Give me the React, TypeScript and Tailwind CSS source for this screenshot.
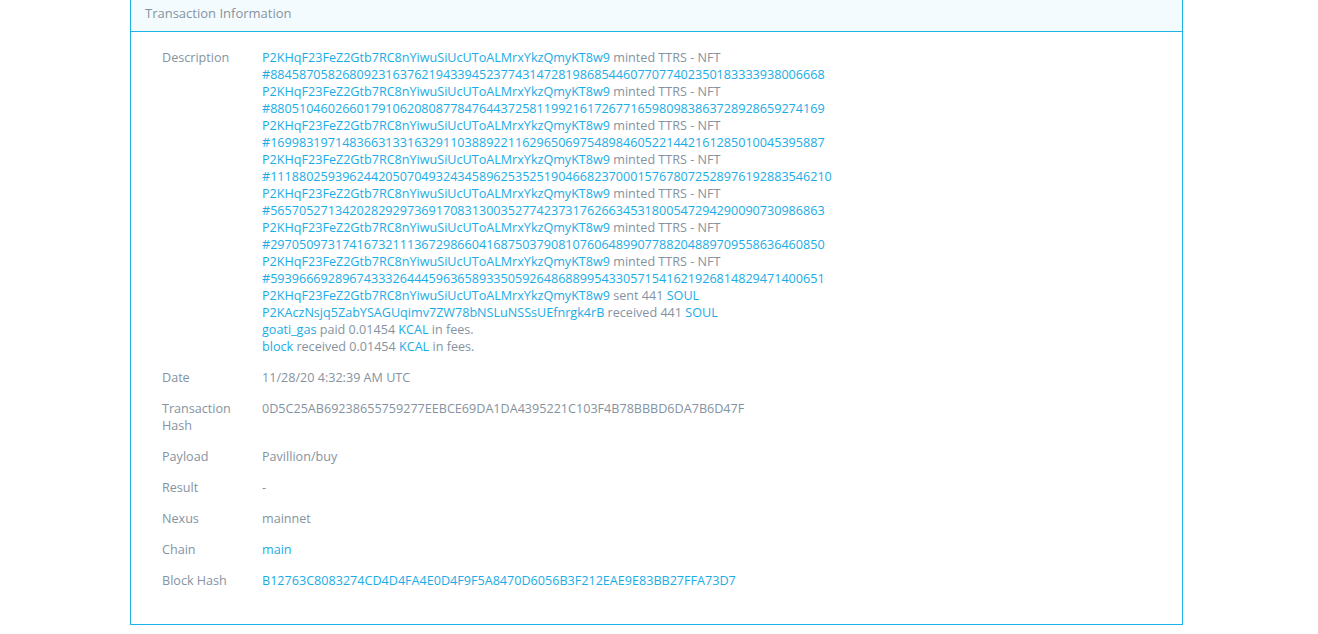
import React from "react";

const ADDR = "P2KHqF23FeZ2Gtb7RC8nYiwuSiUcUToALMrxYkzQmyKT8w9";
const ids = [
  "88458705826809231637621943394523774314728198685446077077402350183333938006668",
  "88051046026601791062080877847644372581199216172677165980983863728928659274169",
  "16998319714836631331632911038892211629650697548984605221442161285010045395887",
  "111880259396244205070493243458962535251904668237000157678072528976192883546210",
  "56570527134202829297369170831300352774237317626634531800547294290090730986863",
  "29705097317416732111367298660416875037908107606489907788204889709558636460850",
  "59396669289674333264445963658933505926486889954330571541621926814829471400651",
];

const L = "text-[#1aace6]";

function Row({ label, children }: { label: React.ReactNode; children: React.ReactNode }) {
  return (
    <div className="flex py-[7px]">
      <div className="w-[100px] shrink-0 pr-[8px] text-[#8593a1]">{label}</div>
      <div className="flex-1 text-[#8593a1]">{children}</div>
    </div>
  );
}

export default function App() {
  return (
    <div
      className="min-h-[634px] bg-white"
      style={{ fontFamily: '"Open Sans", "Liberation Sans", sans-serif' }}
    >
      <div className="ml-[130px] w-[1053px] border-x border-b border-[#1cb4e6] bg-white">
        <div className="h-[32px] border-b border-[#1cb4e6] bg-[#f4fbfe] pl-[14px] pt-[3px] text-[13px] leading-[20px] text-[#8593a1]">
          Transaction Information
        </div>
        <div className="pl-[31px] pr-[20px] pt-[10px] pb-[28px] text-[12.6px] leading-[17px]">
          <Row label="Description">
            {ids.map((id) => (
              <React.Fragment key={id}>
                <div>
                  <span className={L}>{ADDR}</span> minted TTRS - NFT
                </div>
                <div className={L}>#{id}</div>
              </React.Fragment>
            ))}
            <div>
              <span className={L}>{ADDR}</span> sent 441 <span className={L}>SOUL</span>
            </div>
            <div>
              <span className={L}>P2KAczNsjq5ZabYSAGUqimv7ZW78bNSLuNSSsUEfnrgk4rB</span> received 441{" "}
              <span className={L}>SOUL</span>
            </div>
            <div>
              <span className={L}>goati_gas</span> paid 0.01454 <span className={L}>KCAL</span> in fees.
            </div>
            <div>
              <span className={L}>block</span> received 0.01454 <span className={L}>KCAL</span> in fees.
            </div>
          </Row>
          <Row label="Date">11/28/20 4:32:39 AM UTC</Row>
          <Row label={<>Transaction<br />Hash</>}>
            0D5C25AB69238655759277EEBCE69DA1DA4395221C103F4B78BBBD6DA7B6D47F
          </Row>
          <Row label="Payload">Pavillion/buy</Row>
          <Row label="Result">-</Row>
          <Row label="Nexus">mainnet</Row>
          <Row label="Chain">
            <span className={L}>main</span>
          </Row>
          <Row label="Block Hash">
            <span className={L}>B12763C8083274CD4D4FA4E0D4F9F5A8470D6056B3F212EAE9E83BB27FFA73D7</span>
          </Row>
        </div>
      </div>
    </div>
  );
}
